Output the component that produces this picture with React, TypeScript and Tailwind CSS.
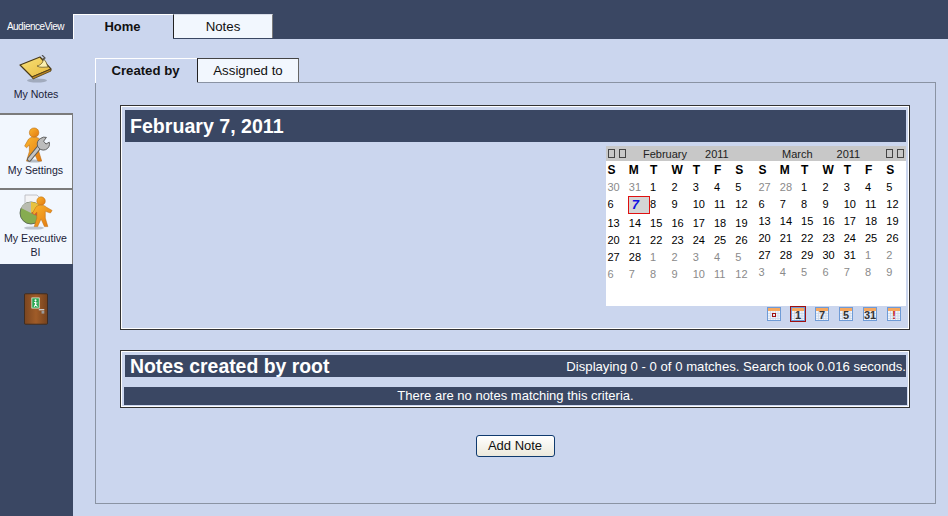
const FEB = [
  [30, 31, 1, 2, 3, 4, 5],
  [6, 7, 8, 9, 10, 11, 12],
  [13, 14, 15, 16, 17, 18, 19],
  [20, 21, 22, 23, 24, 25, 26],
  [27, 28, 1, 2, 3, 4, 5],
  [6, 7, 8, 9, 10, 11, 12],
];

const MAR = [
  [27, 28, 1, 2, 3, 4, 5],
  [6, 7, 8, 9, 10, 11, 12],
  [13, 14, 15, 16, 17, 18, 19],
  [20, 21, 22, 23, 24, 25, 26],
  [27, 28, 29, 30, 31, 1, 2],
  [3, 4, 5, 6, 7, 8, 9],
];

function NotesIcon() {
  return (
    <svg width="36" height="28" viewBox="0 0 36 28">
      <defs>
        <linearGradient id="noteFill" x1="0" y1="0" x2="1" y2="1">
          <stop offset="0" stopColor="#f7e27a" />
          <stop offset="1" stopColor="#e8b93c" />
        </linearGradient>
      </defs>
      <ellipse cx="19" cy="25.5" rx="10" ry="2" fill="#8f98a8" opacity="0.7" />
      <path d="M2 10 L22 2 L33 14 L14 22 Z" fill="url(#noteFill)" stroke="#4a3a18" strokeWidth="1.2" strokeLinejoin="round" />
      <path d="M14 22 L33 14 L33 16 L15 24 Z" fill="#c08a22" stroke="#4a3a18" strokeWidth="0.8" />
      <path d="M19 11 C23 10 26 7 25 3 L28 7 L30 12 C26 12 22 13 19 11 Z" fill="#fbf0b0" stroke="#6b5a28" strokeWidth="0.8" />
      <path d="M24 0 L27 3 L25 5" fill="none" stroke="#555" strokeWidth="1.2" />
    </svg>
  );
}

function SettingsIcon() {
  return (
    <svg width="30" height="36" viewBox="0 0 30 38">
      <defs>
        <linearGradient id="personFill" x1="0" y1="0" x2="1" y2="1">
          <stop offset="0" stopColor="#fbb62e" />
          <stop offset="1" stopColor="#e2770f" />
        </linearGradient>
      </defs>
      <ellipse cx="13" cy="36" rx="8" ry="1.6" fill="#9aa2ae" opacity="0.7" />
      <circle cx="13" cy="6" r="5" fill="url(#personFill)" stroke="#b96a10" strokeWidth="0.6" />
      <path d="M7 13 C9 10 17 10 19 13 L23 20 L20 22 L18 19 L18 26 L21 36 L17 36 L13 27 L9 36 L5 36 L8 26 L8 19 L5 22 L3 20 Z" fill="url(#personFill)" stroke="#b96a10" strokeWidth="0.6" />
      <path d="M8 34 L21 18" stroke="#5c5c5c" strokeWidth="5" strokeLinecap="round" />
      <path d="M8 34 L21 18" stroke="#c4c4c4" strokeWidth="3" strokeLinecap="round" />
      <path d="M20 12 A6.5 6.5 0 1 0 29 16 L25.5 18 L23 15 L26 11 A6.5 6.5 0 0 0 20 12 Z" fill="#bcbcbc" stroke="#5c5c5c" strokeWidth="1" />
    </svg>
  );
}

function ExecutiveIcon() {
  return (
    <svg width="30" height="36" viewBox="0 0 30 36" className="overflow-visible">
      <defs>
        <linearGradient id="personFillB" x1="0" y1="0" x2="1" y2="1">
          <stop offset="0" stopColor="#fbb62e" />
          <stop offset="1" stopColor="#e2770f" />
        </linearGradient>
      </defs>
      <ellipse cx="13" cy="34" rx="10" ry="1.6" fill="#9aa2ae" opacity="0.6" />
      <path d="M4 1 L16 1 L21 6 L21 22 L4 22 Z" fill="#f4f4f6" stroke="#b5b5bb" strokeWidth="0.8" />
      <circle cx="10" cy="19" r="11" fill="#86ac50" stroke="#4d5b4a" strokeWidth="0.8" />
      <path d="M10 19 L0 14 A11 11 0 0 1 10 8 Z" fill="#b9bcb0" />
      <path d="M10 19 L10 8 A11 11 0 0 1 20 14 Z" fill="#e8c23f" />
      <path d="M10 19 L20 14 A11 11 0 0 1 20 24 Z" fill="#c85248" />
      <g transform="translate(9 2) scale(0.85)">
        <circle cx="13" cy="6" r="5" fill="url(#personFillB)" stroke="#b96a10" strokeWidth="0.6" />
        <path d="M7 13 C9 10 17 10 19 13 L26 17 L24 20 L18 18 L18 26 L21 36 L17 36 L13 27 L9 36 L5 36 L8 26 L8 19 L5 22 L3 20 Z" fill="url(#personFillB)" stroke="#b96a10" strokeWidth="0.6" />
      </g>
    </svg>
  );
}

function ExitIcon() {
  return (
    <svg width="24" height="32" viewBox="0 0 26 34">
      <defs>
        <linearGradient id="doorFill" x1="0" y1="0" x2="1" y2="0">
          <stop offset="0" stopColor="#7a4520" />
          <stop offset="0.5" stopColor="#a05c28" />
          <stop offset="1" stopColor="#74421e" />
        </linearGradient>
      </defs>
      <rect x="0.5" y="0.5" width="25" height="33" rx="1" fill="url(#doorFill)" stroke="#3c2a1e" />
      <rect x="8.5" y="5" width="8" height="11" fill="#28a650" stroke="#f0f8f0" strokeWidth="0.8" />
      <circle cx="12.5" cy="7.5" r="1.1" fill="#fff" />
      <path d="M12.5 9 L12.5 12 L11 14.5 M12.5 12 L14.5 14.5 M10.8 10 L14.5 10.5" stroke="#fff" strokeWidth="1.1" fill="none" />
      <rect x="16" y="17" width="6" height="1.5" fill="#c8c8c8" />
      <rect x="19" y="19" width="3" height="3" fill="#9a9a9a" />
    </svg>
  );
}

function CalButton({ label, selected }: { label: string; selected?: boolean }) {
  return (
    <div className={selected ? "flex h-4 w-4 items-center justify-center border-2 border-[#a01010]" : "flex h-4 w-4 items-center justify-center"}>
      <svg width="14" height="14" viewBox="0 0 14 14" className="shrink-0">
        <rect x="0.5" y="0.5" width="13" height="13" fill="#f0f4fb" stroke="#6f9bd6" />
        <rect x="1" y="1" width="12" height="3" fill="#f7a860" />
        <path d="M1 6.5H13M1 9H13M1 11.5H13M3.5 4V13M6 4V13M8.5 4V13M11 4V13" stroke="#c5d2e6" strokeWidth="0.7" />
        {label === "day" ? (
          <rect x="5.5" y="6.5" width="3" height="3" fill="none" stroke="#a01010" />
        ) : (
          <text
            x="7"
            y="12"
            textAnchor="middle"
            fontFamily="'Liberation Sans', sans-serif"
            fontWeight="700"
            fontSize="11"
            fill={label === "!" ? "#c81010" : "#333"}
          >
            {label}
          </text>
        )}
      </svg>
    </div>
  );
}

function Month({ title, weeks, navSide, titleClass, gridClass, first, last }: {
  title: string;
  weeks: number[][];
  navSide: "left" | "right";
  titleClass: string;
  gridClass: string;
  first: number;
  last: number;
}) {
  const nav = (
    <div className="flex gap-[4px]">
      <span className="h-[9px] w-[7px] border border-[#444]" />
      <span className="h-[9px] w-[7px] border border-[#444]" />
    </div>
  );

  return (
    <div className="w-[150px]">
      <div className="flex h-[15px] items-center justify-between bg-[#c8c8c8] px-[2px] text-[11px] text-[#222]">
        {navSide === "left" ? nav : null}
        <div className={titleClass}>
          <span>{title}</span>
          <span>2011</span>
        </div>
        {navSide === "right" ? nav : null}
      </div>
      <div className={gridClass}>
        {["S", "M", "T", "W", "T", "F", "S"].map((d, i) => (
          <div key={i} className="h-[17px] text-[12px] font-bold">{d}</div>
        ))}
        {weeks.flatMap((week, w) =>
          week.map((day, i) => {
            const idx = w * 7 + i;
            const out = idx < first || idx > last;
            if (title === "February" && day === 7 && w === 1) {
              return (
                <div key={idx} className="-ml-px mb-px h-[18px] w-[22px] border border-[#e01010] bg-[#d4d4d4] pl-[3px] text-[13px] leading-[16px] font-bold text-[#1010e0] italic">
                  {day}
                </div>
              );
            }
            return (
              <div key={idx} className={out ? "h-[17px] text-[#8a8a8a]" : "h-[17px]"}>{day}</div>
            );
          })
        )}
      </div>
    </div>
  );
}

function SideItem({ icon, label, active }: { icon: React.ReactNode; label: React.ReactNode; active?: boolean }) {
  return (
    <div className={active
      ? "flex flex-col items-center border-t-2 border-r border-[#7b7b7b] bg-[#f2f7fe] pr-px text-center"
      : "flex flex-col items-center pr-px text-center"}>
      {icon}
      <div className="text-[10.6px] leading-[14px] text-[#1a2238]">{label}</div>
    </div>
  );
}

export default function App() {
  return (
    <div className="flex h-[516px] w-[948px] flex-col overflow-hidden bg-[#cbd6ee] font-['Liberation_Sans',Arial,sans-serif]">
      <div className="flex h-[39px] items-end bg-[#3a4763]">
        <div className="flex h-[25px] w-[73px] items-center justify-center pr-[2px] text-[10px] tracking-[-0.5px] text-white">AudienceView</div>
        <div className="flex h-[25px] w-[100px] items-center justify-center border-t border-l border-white bg-[#cbd6ee] pr-[2px] text-[13px] font-bold text-[#111]">Home</div>
        <div className="mb-px flex h-[24px] w-[100px] items-center justify-center border-t border-r border-l border-t-[#d8dde8] border-r-[#7b7b7b] border-l-[#222] bg-[#f2f7fe] text-[13.3px] text-[#111]">Notes</div>
      </div>

      <div className="flex flex-1">
        <div className="flex w-[73px] flex-col bg-[#3a4763]">
          <div className="h-[74px] bg-[#cbd6ee] pt-[16px]">
            <SideItem icon={<NotesIcon />} label={<span className="mt-[4px] block">My Notes</span>} />
          </div>
          <div className="h-[75px]">
            <SideItem active icon={<div className="flex h-[48px] items-end"><SettingsIcon /></div>} label={<span className="block h-[25px]">My Settings</span>} />
          </div>
          <div className="h-[76px]">
            <SideItem active icon={<div className="flex h-[40px] items-end"><ExecutiveIcon /></div>} label={<span className="block h-[34px] pt-[1px]">My Executive<br />BI</span>} />
          </div>
          <div className="flex justify-center pt-[29px] pr-[2px]">
            <ExitIcon />
          </div>
        </div>

        <div className="flex flex-1 flex-col pt-[19px] pr-[12px] pl-[22px]">
          <div className="relative z-10 -mb-px flex h-[25px] items-start">
            <div className="flex h-[25px] w-[102px] items-center justify-center border-t border-l border-white bg-[#cbd6ee] pr-[2px] text-[13.2px] font-bold text-[#111]">Created by</div>
            <div className="flex h-[24px] w-[102px] items-center justify-center border-t border-r border-l border-t-[#444] border-r-[#666] border-l-[#222] bg-[#f2f7fe] text-[13.3px] text-[#111]">Assigned to</div>
          </div>

          <div className="h-[422px] border border-[#8a93a3] pt-[22px] pr-[25px] pl-[24px]">
            <div className="h-[225px] border border-[#333] pt-[4px] pr-[3px] pb-[2px] pl-[4px] shadow-[inset_0_0_0_1px_#fff]">
              <div className="flex h-[32px] items-center bg-[#3a4763] pt-[2px] pl-[5px] text-[19.6px] font-bold text-white">February 7, 2011</div>
              <div className="mt-[4px] ml-auto w-[300px]">
                <div className="flex h-[160px] bg-white">
                  <Month title="February" weeks={FEB} navSide="left" titleClass="flex flex-1 gap-[18px] pt-px pl-[17px]" gridClass="grid grid-cols-[repeat(7,21.3px)] items-start pt-px pl-[1.5px] text-[11px] leading-[17px] text-black" first={2} last={29} />
                  <div className="h-[136px] w-[1px] bg-[#c8c8c8]" />
                  <div className="w-[1px]" />
                  <Month title="March" weeks={MAR} navSide="right" titleClass="flex flex-1 gap-[24px] pt-px pl-[24px]" gridClass="grid grid-cols-[repeat(7,21.3px)] items-start pt-px pl-[2.5px] text-[11px] leading-[17px] text-black" first={2} last={32} />
                </div>
                <div className="flex h-[17px] items-start justify-end gap-[8px] pr-[4px]">
                  <CalButton label="day" />
                  <CalButton label="1" selected />
                  <CalButton label="7" />
                  <CalButton label="5" />
                  <CalButton label="31" />
                  <CalButton label="!" />
                </div>
              </div>
            </div>

            <div className="mt-[20px] h-[58px] border border-[#333] pt-[4px] pr-[2px] pb-[2px] pl-[3px] shadow-[inset_0_0_0_1px_#fff]">
              <div className="mx-px flex h-[22px] items-center justify-between bg-[#3a4763] pt-[2px] pl-[5px] text-white">
                <span className="text-[19.4px] font-bold">Notes created by root</span>
                <span className="text-[13.15px]">Displaying 0 - 0 of 0 matches. Search took 0.016 seconds.</span>
              </div>
              <div className="mt-[10px] flex h-[18px] items-center justify-center bg-[#3a4763] text-[13px] text-white">There are no notes matching this criteria.</div>
            </div>

            <div className="mt-[27px] flex justify-center">
              <button className="h-[22px] w-[79px] rounded-[3px] border border-[#0f3a6e] bg-gradient-to-b from-white to-[#ece9dc] text-[13px] text-[#111]">Add Note</button>
            </div>
          </div>
        </div>
      </div>
    </div>
  );
}
